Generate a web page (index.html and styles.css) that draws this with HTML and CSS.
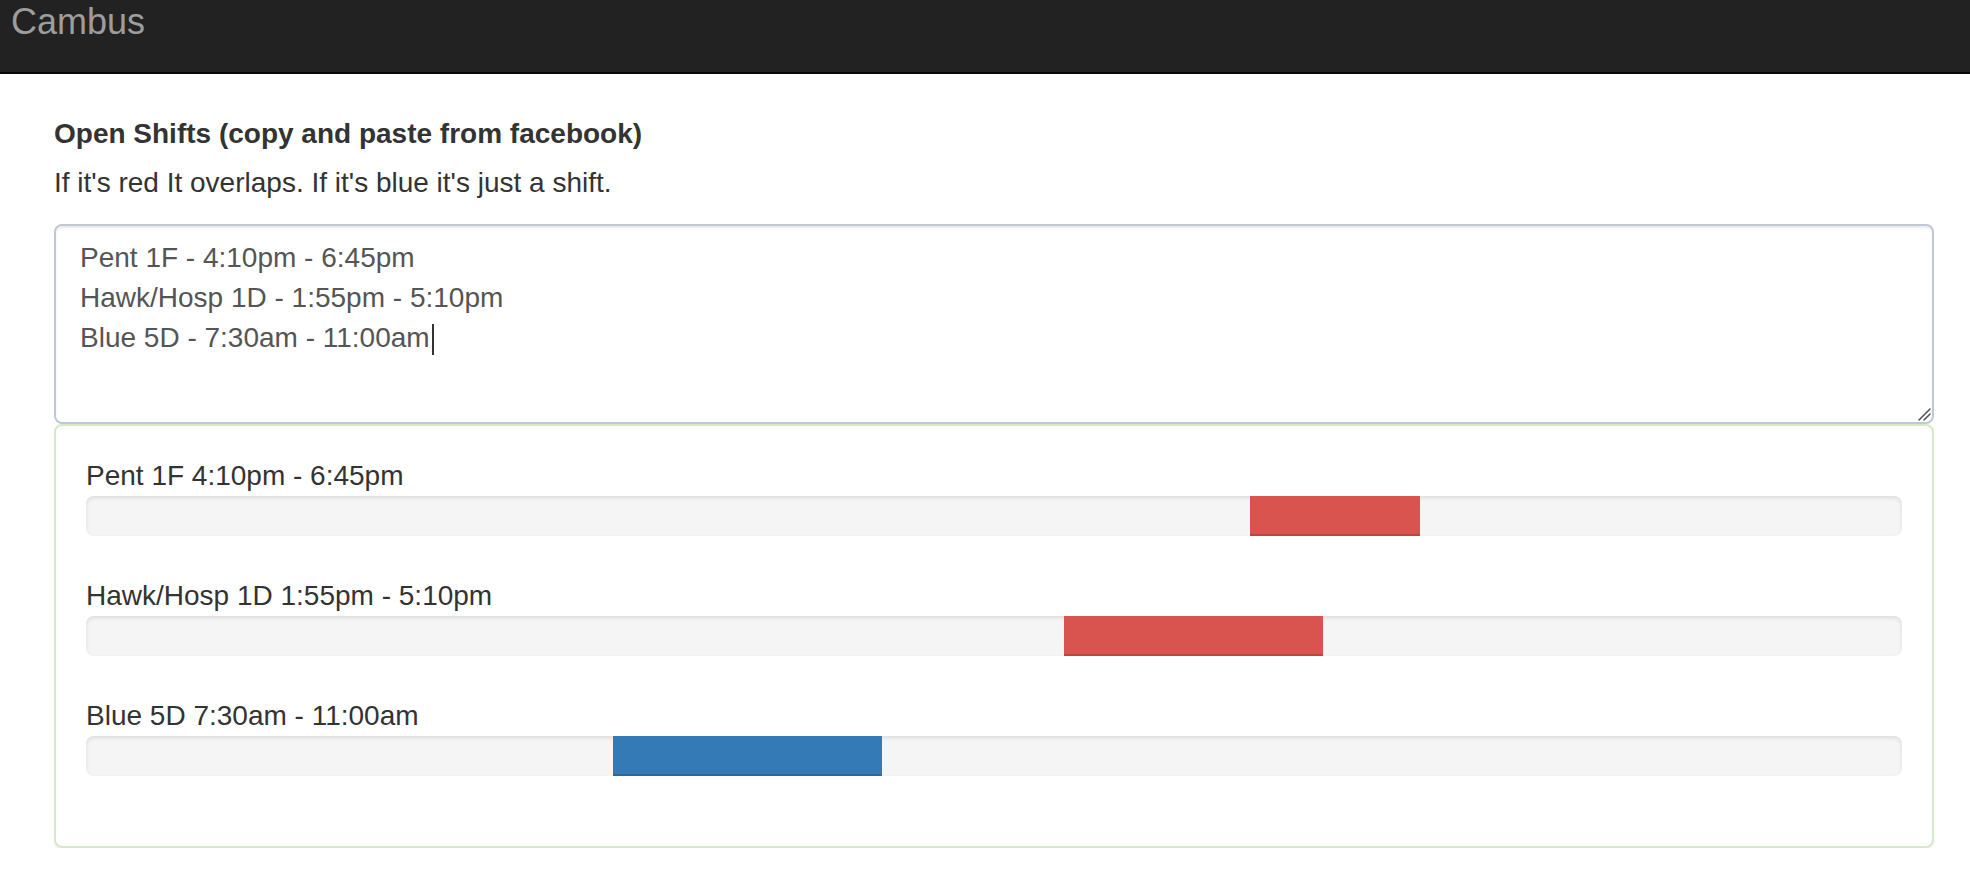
FILE: index.html
```html
<!DOCTYPE html>
<html lang="en">
<head>
<meta charset="utf-8">
<title>Cambus</title>
<link rel="stylesheet" href="styles.css">
</head>
<body>
<nav class="navbar">
  <span class="brand">Cambus</span>
</nav>
<main class="container">
  <label class="title" for="shifts">Open Shifts (copy and paste from facebook)</label>
  <p class="hint">If it's red It overlaps. If it's blue it's just a shift.</p>
  <div class="editor">
    <textarea id="shifts" class="shifts-input" spellcheck="false">Pent 1F - 4:10pm - 6:45pm
Hawk/Hosp 1D - 1:55pm - 5:10pm
Blue 5D - 7:30am - 11:00am</textarea>
    <span class="caret"></span>
    <svg class="grip" width="14" height="14" viewBox="0 0 14 14" aria-hidden="true">
      <path d="M2 13 L13 2 M7 13 L13 7" stroke="#555" stroke-width="1.6" stroke-linecap="round" fill="none"/>
    </svg>
  </div>
  <section class="panel">
    <div class="shift">
      <div class="shift-label">Pent 1F 4:10pm - 6:45pm</div>
      <div class="progress"><div class="bar bar-danger" style="margin-left:64.08%;width:9.37%"></div></div>
    </div>
    <div class="shift">
      <div class="shift-label">Hawk/Hosp 1D 1:55pm - 5:10pm</div>
      <div class="progress"><div class="bar bar-danger" style="margin-left:53.88%;width:14.21%"></div></div>
    </div>
    <div class="shift">
      <div class="shift-label">Blue 5D 7:30am - 11:00am</div>
      <div class="progress"><div class="bar bar-primary" style="margin-left:29.04%;width:14.77%"></div></div>
    </div>
  </section>
</main>
</body>
</html>
```

FILE: styles.css
```css
html, body {
  margin: 0;
  padding: 0;
  background: #fff;
}
body {
  font-family: "Liberation Sans", Arial, Helvetica, sans-serif;
  font-size: 28px;
  line-height: 40px;
  color: #333;
}
.navbar {
  background: #222;
  border-bottom: 2px solid #080808;
  box-sizing: border-box;
  height: 74px;
  padding: 2px 0 0 11px;
  margin-bottom: 40px;
}
.brand {
  color: #9d9d9d;
  font-size: 36px;
  line-height: 40px;
  display: block;
}
.container {
  padding: 0 36px 0 54px;
}
.title {
  display: block;
  font-weight: bold;
  margin-bottom: 9px;
}
.hint {
  margin: 0 0 21px;
}
.editor {
  position: relative;
}
.shifts-input {
  display: block;
  box-sizing: border-box;
  width: 100%;
  height: 200px;
  margin: 0;
  padding: 12px 24px;
  font-family: inherit;
  font-size: 28px;
  line-height: 40px;
  color: #555;
  background: #fff;
  border: 2px solid #bfc8d3;
  border-radius: 8px;
  box-shadow: inset 0 2px 2px rgba(0,0,0,.075);
  outline: none;
  resize: none;
}
.caret {
  position: absolute;
  left: 378px;
  top: 100px;
  width: 2px;
  height: 31px;
  background: #333;
}
.grip {
  position: absolute;
  right: 3px;
  bottom: 3px;
}
.panel {
  border: 2px solid #d6e9c6;
  border-radius: 8px;
  padding: 30px;
  box-shadow: 0 2px 2px rgba(0,0,0,.05);
  display: flex;
  flex-direction: column;
  gap: 40px;
}
.shift-label {
  height: 40px;
}
.progress {
  display: flex;
  height: 40px;
  background: #f5f5f5;
  border-radius: 8px;
  box-shadow: inset 0 2px 4px rgba(0,0,0,.1);
  overflow: hidden;
}
.bar {
  height: 100%;
  box-shadow: inset 0 -2px 0 rgba(0,0,0,.15);
}
.bar-danger {
  background: #d9534f;
}
.bar-primary {
  background: #337ab7;
}
.panel .shift:last-child {
  margin-bottom: 40px;
}
```
